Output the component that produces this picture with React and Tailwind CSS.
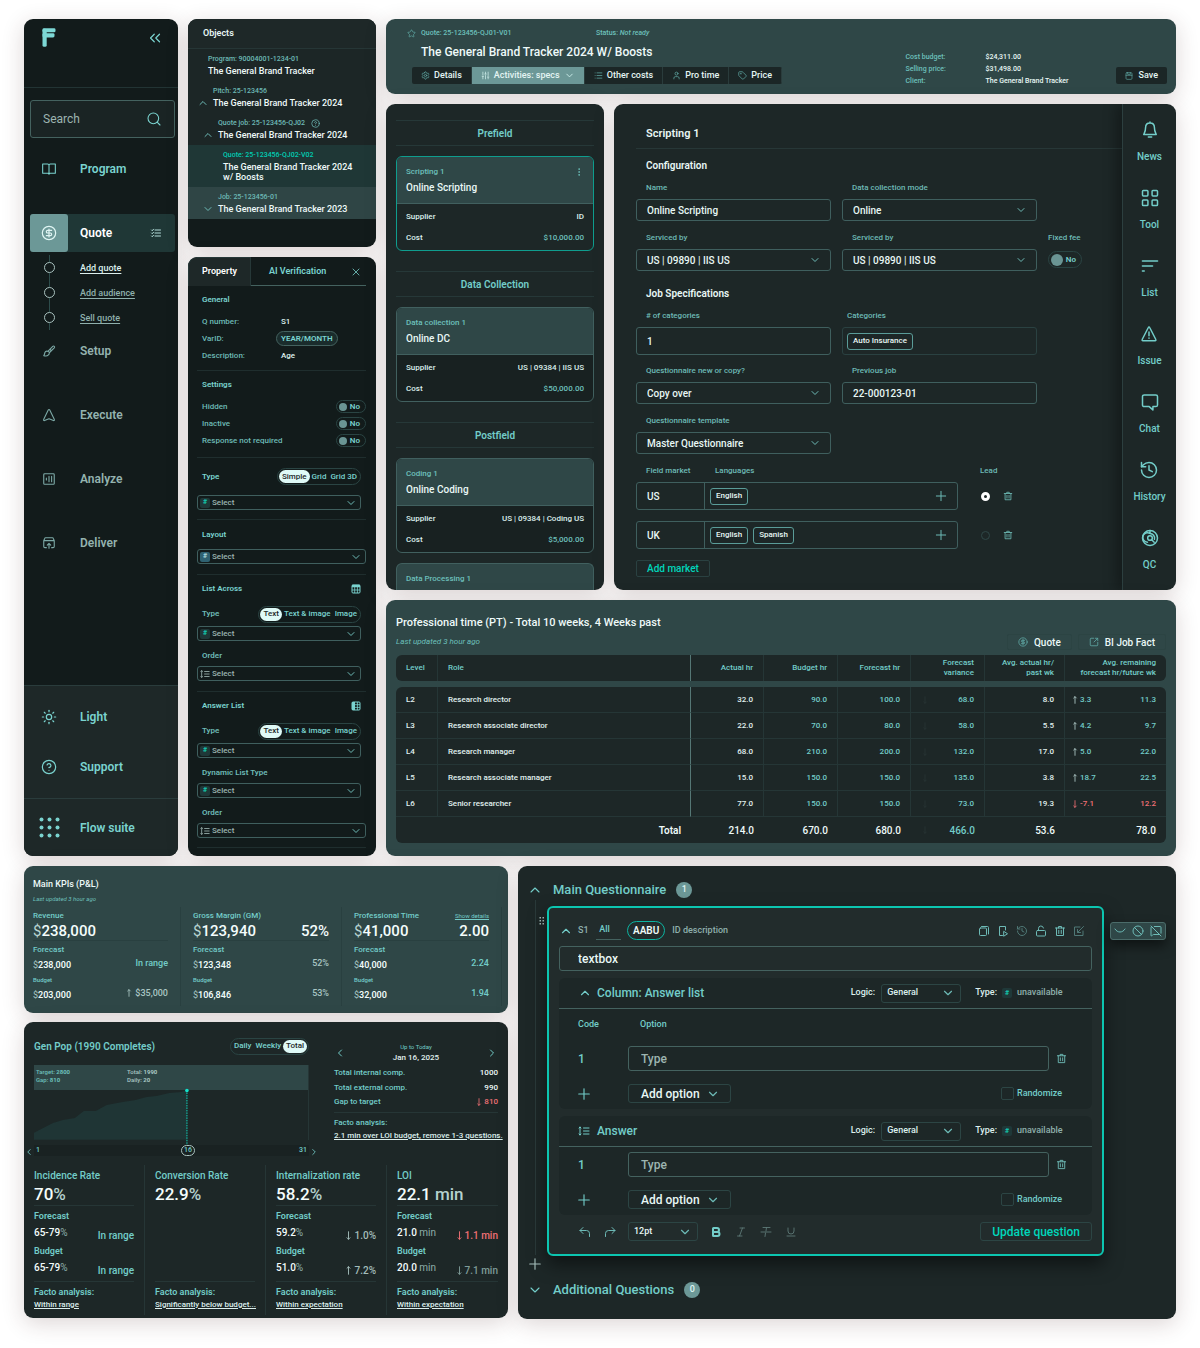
import React from 'react'
import clsx from 'clsx'
import {
  Ban,
  Bold,
  ChevronDown,
  ChevronLeft,
  ChevronRight,
  ChevronsLeft,
  ChevronUp,
  CircleDollarSign,
  CircleHelp,
  EllipsisVertical,
  History,
  Italic,
  List,
  LockOpen,
  MessageSquareOff,
  MoveDown,
  MoveUp,
  Plus,
  Search,
  Settings,
  SlidersVertical,
  SquareArrowOutUpRight,
  Star,
  Sun,
  Tag,
  Underline,
  User,
  X,
} from 'lucide-react'

/* ---------- icons ---------- */

function Svg({ className, children, strokeWidth = 1.6 }) {
  return (
    <svg
      viewBox="0 0 24 24"
      fill="none"
      stroke="currentColor"
      strokeWidth={strokeWidth}
      strokeLinecap="round"
      strokeLinejoin="round"
      aria-hidden="true"
      className={className}
    >
      {children}
    </svg>
  )
}

const Logo = () => (
  <svg viewBox="0 0 14 19" className="h-[19px] w-3.5 text-[#7dd8d5]" fill="currentColor" role="img" aria-label="Flow">
    <rect x="0.5" y="0.3" width="13" height="4" rx="1.4" />
    <rect x="0.5" y="5.2" width="12" height="4.2" rx="1.4" />
    <rect x="0.5" y="0.8" width="4.2" height="18" rx="1.6" />
  </svg>
)

const BookIcon = ({ className }) => (
  <Svg className={className}>
    <path d="M12 6.500V19M12 6.500C12 5.400 11.100 4.500 10 4.500H2.500v14H10c1.100 0 2 .4 2 1.200 0-.8.9-1.200 2-1.200h7.500v-14H14c-1.100 0-2 .9-2 2z" />
  </Svg>
)

const TaskListIcon = ({ className }) => (
  <Svg className={className} strokeWidth={2}>
    <path d="M10 6h11M10 12h11M10 18h11M3 6l1.500 1.500L7 4.500M3 12l1.500 1.500L7 10.500M3 18l1.500 1.500L7 16.500" />
  </Svg>
)

const BrushIcon = ({ className }) => (
  <Svg className={className} strokeWidth={1.9}>
    <path d="M10 12.500L18.500 4c.8-.8 2-.8 2.600-.1.700.7.600 1.800-.1 2.600L12.500 15M10 12.500c-2-.6-4.300.2-5 2-.7 1.900-.5 4-2 5.500 2.500.9 6.200.6 8-1.200 1.200-1.200 1.700-2.500 1.500-3.800M10 12.500c1.300.3 2.200 1.200 2.500 2.500M13.500 9l2.500 2.500" />
  </Svg>
)

const ExecuteIcon = ({ className }) => (
  <Svg className={className} strokeWidth={1.9}>
    <path d="M10.700 3.300L2.800 19.600c-.6 1.100.4 2.300 1.600 1.900L12 18.500l7.600 3c1.200.4 2.200-.8 1.600-1.900L13.300 3.300c-.6-1-2-1-2.600 0z" />
  </Svg>
)

const AnalyzeIcon = ({ className }) => (
  <Svg className={className} strokeWidth={1.9}>
    <rect x="3" y="3" width="18" height="18" rx="1.500" />
    <path d="M7.500 10.500v3M12 7.500v9M16.500 7.500v9" />
  </Svg>
)

const DeliverIcon = ({ className }) => (
  <Svg className={className} strokeWidth={1.9}>
    <path d="M7.500 20H5a2 2 0 01-2-2V8l1.600-3.800c.2-.7.800-1.200 1.600-1.200h11.600c.8 0 1.400.5 1.600 1.200L21 8v10a2 2 0 01-2 2h-2.500M3 8h18M12 21v-8M9 15.500l3-3 3 3" />
  </Svg>
)

const DotGridIcon = () => (
  <svg viewBox="0 0 21 21" className="size-[21px]" fill="currentColor" aria-hidden="true">
    {[2.5, 10.5, 18.5].map((y) =>
      [2.5, 10.5, 18.5].map((x) => <circle key={x + '-' + y} cx={x} cy={y} r="2" />)
    )}
  </svg>
)

const BellIcon = ({ className }) => (
  <Svg className={className} strokeWidth={1.8}>
    <path d="M12 3.500c-3.300 0-5.300 2.300-5.300 5.500 0 5-1.700 6.500-2.200 8.500h15c-.5-2-2.200-3.500-2.200-8.500 0-3.200-2-5.500-5.300-5.500zM12 3.500V2.500M10 20.500h4" />
  </Svg>
)

const ToolIcon = ({ className }) => (
  <Svg className={className} strokeWidth={1.8}>
    <rect x="3" y="3" width="6.500" height="6.500" rx="1" />
    <rect x="14.500" y="3" width="6.500" height="6.500" rx="1" />
    <rect x="3" y="14.500" width="6.500" height="6.500" rx="1" />
    <rect x="14.500" y="14.500" width="6.500" height="6.500" rx="1" />
  </Svg>
)

const BarsIcon = ({ className }) => (
  <Svg className={className} strokeWidth={2}>
    <path d="M3 6h18M3 12h12M3 18h2" />
  </Svg>
)

const IssueIcon = ({ className }) => (
  <Svg className={className} strokeWidth={1.8}>
    <path d="M11.200 4.200L3.800 18.600c-.4.700.1 1.400.8 1.400h14.800c.7 0 1.200-.7.800-1.400L12.800 4.200c-.3-.7-1.300-.7-1.600 0zM12 9.500v4.500M12 16.800v.2" />
  </Svg>
)

const ChatIcon = ({ className }) => (
  <Svg className={className} strokeWidth={1.8}>
    <path d="M5 3.500h14a2 2 0 012 2v10a2 2 0 01-2 2h-3.500v4l-4.500-4H5a2 2 0 01-2-2v-10a2 2 0 012-2z" />
  </Svg>
)

const QcIcon = ({ className }) => (
  <Svg className={className} strokeWidth={1.8}>
    <circle cx="12" cy="12" r="9" />
    <circle cx="12" cy="12" r="2.800" />
    <path d="M12 3v3.500M9 17a5.700 5.700 0 113-10.500M12 6.500a5.600 5.600 0 015.300 7M14 14l3 3" />
  </Svg>
)

const TrashIcon = ({ className }) => (
  <Svg className={className} strokeWidth={2}>
    <path d="M3 6h18M9 6V3h6v3M5 6v15h14V6M9.500 10.500v6.500M14.500 10.500v6.500" />
  </Svg>
)

const SaveIcon = ({ className }) => (
  <Svg className={className} strokeWidth={2}>
    <rect x="3" y="2" width="18" height="20" rx="3" />
    <path d="M3 10h18M8 2v5h8V2" />
  </Svg>
)

const CopyIcon = ({ className }) => (
  <Svg className={className} strokeWidth={2}>
    <rect x="3" y="6" width="14" height="15" rx="2" />
    <path d="M7 3h12a2 2 0 012 2v13" />
  </Svg>
)

const RunIcon = ({ className }) => (
  <Svg className={className} strokeWidth={2}>
    <path d="M11 21H5V3h12v7M14 13l7 4.500-7 4.500z" />
  </Svg>
)

const EditIcon = ({ className }) => (
  <Svg className={className} strokeWidth={2}>
    <path d="M20 12v9H3V4h11M21 3L9 15M9 9v6h6" />
  </Svg>
)

const StrikeIcon = ({ className }) => (
  <Svg className={className} strokeWidth={1.8}>
    <path d="M6 3h14M13 3l-1 7M11 14l-1 7M2 12h20" />
  </Svg>
)

const OrderIcon = ({ className }) => (
  <Svg className={className} strokeWidth={2}>
    <path d="M4 4v16M2 6l2-2 2 2M2 18l2 2 2-2M11 6h11M11 12h11M11 18h11" />
  </Svg>
)

const UndoIcon = ({ className }) => (
  <Svg className={className} strokeWidth={2}>
    <path d="M8 3L2 9l6 6M2 9h13a6 6 0 016 6v6" />
  </Svg>
)

const DragIcon = () => (
  <svg viewBox="0 0 6 10" className="h-2.5 w-1.5" fill="currentColor" aria-hidden="true">
    {[1, 4, 7].map((y) => (
      <React.Fragment key={y}>
        <rect x="0.5" y={y} width="1.5" height="1.5" />
        <rect x="3.5" y={y} width="1.5" height="1.5" />
      </React.Fragment>
    ))}
  </svg>
)

const GridTopIcon = () => (
  <svg viewBox="0 0 10 10" className="size-2.5" fill="none" stroke="currentColor" aria-hidden="true">
    <rect x="1" y="1" width="8" height="8" rx="1" />
    <path d="M1 2h8" strokeWidth="2.5" />
    <path d="M1 6h8M3.7 3v6M6.4 3v6" strokeWidth="0.8" />
  </svg>
)

const GridLeftIcon = () => (
  <svg viewBox="0 0 10 10" className="size-2.5" fill="none" stroke="currentColor" aria-hidden="true">
    <rect x="1" y="1" width="8" height="8" rx="1" />
    <path d="M2.5 1v8" strokeWidth="3" />
    <path d="M6.4 1v8M4 3.7h5M4 6.4h5" strokeWidth="0.8" />
  </svg>
)

/* ---------- shared controls ---------- */

const panel = 'overflow-hidden rounded-[9px] shadow-[0_5px_22px_rgba(70,30,30,0.19)]'

function HashBadge({ className }) {
  return (
    <span
      className={clsx(
        'flex size-2.5 items-center justify-center rounded-xs text-[7px] leading-none font-bold',
        className || 'bg-[#1f3838] text-[#12c9b0]'
      )}
    >
      #
    </span>
  )
}

function Select({ value, label, id, icon, className, wrap, chevron = 'mr-2.5 size-3' }) {
  return (
    <span className={clsx('grid items-center', wrap)}>
      <select
        id={id}
        aria-label={label}
        className={clsx(
          'col-start-1 row-start-1 w-full min-w-0 appearance-none rounded-[3px] border bg-transparent outline-none',
          className
        )}
      >
        <option>{value}</option>
      </select>
      {icon && <span className="pointer-events-none col-start-1 row-start-1 ml-[3px] justify-self-start">{icon}</span>}
      <ChevronDown
        className={clsx('pointer-events-none col-start-1 row-start-1 justify-self-end text-[#6dbab6]', chevron)}
      />
    </span>
  )
}

function Toggle({ label, large }) {
  return (
    <label
      className={clsx(
        'flex items-center justify-between rounded-full border border-[#2a4443] pr-[5px] pl-0.5 text-[8px] font-semibold text-[#7ad3cf]',
        large ? 'h-[17px] w-[34px]' : 'h-[13px] w-[30px]'
      )}
    >
      <input
        type="checkbox"
        role="switch"
        aria-label={label}
        className={clsx('appearance-none rounded-full bg-[#6a9594]', large ? 'size-3' : 'size-2')}
      />
      <span className="leading-none">No</span>
    </label>
  )
}

function Segments({ items, active }) {
  return (
    <div className="flex h-[17px] items-center rounded-full border border-[#2a4443] px-px text-[8px] font-medium">
      {items.map((item) => (
        <button
          key={item}
          type="button"
          className={clsx(
            'h-[13px] rounded-full leading-none',
            item === active ? 'bg-[#dffaf7] px-[3px] text-[#1d2727]' : 'px-0.5 text-[#7ad3cf]'
          )}
        >
          {item}
        </button>
      ))}
    </div>
  )
}

/* ---------- sidebar ---------- */

const steps = [
  { name: 'Add quote', current: true },
  { name: 'Add audience' },
  { name: 'Sell quote' },
]

const later = [
  { name: 'Setup', Icon: BrushIcon },
  { name: 'Execute', Icon: ExecuteIcon },
  { name: 'Analyze', Icon: AnalyzeIcon },
  { name: 'Deliver', Icon: DeliverIcon },
]

function Sidebar() {
  return (
    <aside className={clsx(panel, 'flex w-[154px] shrink-0 flex-col bg-[#121b1b] text-xs font-semibold text-[#7ad3cf]')}>
      <div className="flex h-[69px] items-start justify-between border-b border-[#223434] pt-[9px] pr-3.5 pl-[18px]">
        <Logo />
        <button type="button" aria-label="Collapse menu" className="pt-px">
          <ChevronsLeft className="size-[18px]" strokeWidth={1.6} />
        </button>
      </div>

      <label className="mt-3 mr-[3px] ml-1.5 flex h-[38px] items-center rounded-[3px] border border-[#44625f] bg-[#1a2424] px-3">
        <input
          type="search"
          aria-label="Search"
          placeholder="Search"
          className="w-full min-w-0 bg-transparent font-normal outline-none placeholder:text-[#9db5b1]"
        />
        <Search className="size-4 shrink-0" strokeWidth={1.6} />
      </label>

      <nav className="mt-3 mr-[3px] ml-1.5 flex flex-col">
        <a href="#program" className="flex h-[38px] items-center">
          <span className="flex w-[38px] justify-center">
            <BookIcon className="size-4" />
          </span>
          <span className="ml-3">Program</span>
        </a>

        <a href="#quote" className="mt-[26px] flex h-[38px] items-center rounded-[3px] bg-[#1f3736] text-white">
          <span className="flex h-full w-[38px] items-center justify-center rounded-[3px] bg-[#6c9897] text-[#dff5f3]">
            <CircleDollarSign className="size-4" strokeWidth={1.8} />
          </span>
          <span className="ml-3 flex-1">Quote</span>
          <TaskListIcon className="mr-[13px] size-3 text-[#b5dedb]" />
        </a>

        <ul className="flex flex-col pt-[3px] pb-0.5 text-[9px] font-medium">
          {steps.map((step) => (
            <li key={step.name} className="flex h-[25px] items-stretch">
              <span className="flex w-[38px] flex-col items-center">
                <span className="w-px flex-1 bg-[#2d4c4b]" />
                <span className="size-[11px] rounded-full border border-[#a9c2bf]" />
                <span className="w-px flex-1 bg-[#2d4c4b]" />
              </span>
              <a
                href="#step"
                className={clsx(
                  'ml-3 flex items-center underline underline-offset-2',
                  step.current ? 'text-[#dcefed]' : 'text-[#8fb0ac]'
                )}
              >
                {step.name}
              </a>
            </li>
          ))}
        </ul>

        <div className="flex flex-col gap-[26px] text-[#94b3af]">
          {later.map(({ name, Icon }) => (
            <a key={name} href={'#' + name} className="flex h-[38px] items-center">
              <span className="flex w-[38px] justify-center text-[#7ca9a6]">
                <Icon className="size-3.5" />
              </span>
              <span className="ml-3">{name}</span>
            </a>
          ))}
        </div>
      </nav>

      <div className="mt-auto border-t border-[#2a3c3c] bg-[#1e2828]">
        <div className="px-1.5 py-1.5">
          <button type="button" className="flex h-[50px] w-full items-center">
            <span className="flex w-[38px] justify-center">
              <Sun className="size-4" strokeWidth={1.8} />
            </span>
            <span className="ml-3">Light</span>
          </button>
          <button type="button" className="flex h-[50px] w-full items-center">
            <span className="flex w-[38px] justify-center">
              <CircleHelp className="size-4" strokeWidth={1.8} />
            </span>
            <span className="ml-3">Support</span>
          </button>
        </div>
        <button type="button" className="flex h-[58px] w-full items-center border-t border-[#2a3c3c] px-1.5">
          <span className="flex w-[38px] justify-center">
            <DotGridIcon />
          </span>
          <span className="ml-3">Flow suite</span>
        </button>
      </div>
    </aside>
  )
}

/* ---------- objects tree ---------- */

const objects = [
  { label: 'Program: 90004001-1234-01', title: 'The General Brand Tracker', pad: 'pl-[5px]' },
  { label: 'Pitch: 25-123456', title: 'The General Brand Tracker 2024', pad: 'pl-2.5', arrow: 'up' },
  { label: 'Quote job: 25-123456-QJ02', title: 'The General Brand Tracker 2024', pad: 'pl-[15px]', arrow: 'up', help: true },
  {
    label: 'Quote: 25-123456-QJ02-V02',
    title: 'The General Brand Tracker 2024 w/ Boosts',
    pad: 'pl-5',
    row: 'bg-[#1f3736]',
    tone: 'text-[#00cdb4]',
  },
  { label: 'Job: 25-123456-01', title: 'The General Brand Tracker 2023', pad: 'pl-[15px]', arrow: 'down', row: 'bg-[#2f4545]' },
]

function Objects() {
  return (
    <section className={clsx(panel, 'bg-[#121b1b] pb-7')}>
      <h2 className="flex h-[30px] items-center border-b border-[#263636] bg-[#1e2828] px-[15px] text-[9px] font-semibold text-[#e8f7f5]">
        Objects
      </h2>
      <ul className="bg-[#1c2626]">
        {objects.map((o) => (
          <li key={o.label} className={clsx('flex gap-[5px] py-[5px] pr-3 leading-[10px]', o.pad, o.row)}>
            <span className="mt-3 flex h-2.5 w-2.5 shrink-0 items-center justify-center text-[#6dbab6]">
              {o.arrow === 'up' && <ChevronUp className="size-3 shrink-0" />}
              {o.arrow === 'down' && <ChevronDown className="size-3 shrink-0" />}
            </span>
            <span>
              <span className={clsx('flex items-center gap-1.5 text-[7px] font-medium', o.tone || 'text-[#6dbab6]')}>
                {o.label}
                {o.help && <CircleHelp className="size-[9px]" />}
              </span>
              <span className="mt-0.5 block text-[9px] font-medium text-[#eef9f8]">{o.title}</span>
            </span>
          </li>
        ))}
      </ul>
    </section>
  )
}

/* ---------- property panel ---------- */

function PropSelect({ label, wide, icon }) {
  return (
    <Select
      label={label}
      value="Select"
      icon={icon || <HashBadge />}
      wrap={wide ? '' : 'mr-[5px]'}
      chevron="mr-1 size-3"
      className="h-[15px] border-[#3f5f5e] bg-[#1c2626] pl-[14px] text-[8px] text-[#9db5b1]"
    />
  )
}

const group = 'border-b border-[#1f2e2e]'

function Property() {
  const order = <OrderIcon className="size-2.5 text-[#9db5b1]" />
  const general = [
    ['Q number:', 'S1'],
    ['VarID:', 'YEAR/MONTH'],
    ['Description:', 'Age'],
  ]
  return (
    <section className={clsx(panel, 'flex-1 bg-[#121b1b] pb-2 text-[8px] font-medium text-[#6dbab6]')}>
      <div className="flex h-[29px] text-[9px]">
        <button
          type="button"
          className="w-[63px] rounded-tl-[9px] border border-b-0 border-[#263838] bg-[#1e2828] font-semibold text-white"
        >
          Property
        </button>
        <div className="mr-2.5 flex flex-1 items-center justify-between border-b border-[#44625f] pt-0.5 pr-1 pl-[18px]">
          <button type="button" className="font-semibold text-[#7ad3cf]">
            AI Verification
          </button>
          <button type="button" aria-label="Close">
            <X className="size-3" strokeWidth={1.8} />
          </button>
        </div>
      </div>

      <div className="pr-2.5 pl-[9px]">
        <div className={clsx(group, 'pb-1.5 pl-[5px]')}>
          <h3 className="flex h-[27px] items-center font-semibold text-[#7ad3cf]">General</h3>
          {general.map(([key, value]) => (
            <div key={key} className="flex h-[17px] items-center">
              <span className="w-[74px]">{key}</span>
              {key === 'VarID:' ? (
                <span className="flex h-[15px] items-center rounded-full border border-[#44625f] bg-[#1a2c2c] px-1 font-semibold text-[#7ad3cf]">
                  {value}
                </span>
              ) : (
                <span className="ml-[5px] text-[#dff3f1]">{value}</span>
              )}
            </div>
          ))}
        </div>

        <div className={clsx(group, 'pb-2 pl-[5px]')}>
          <h3 className="flex h-[27px] items-center font-semibold text-[#7ad3cf]">Settings</h3>
          {['Hidden', 'Inactive', 'Response not required'].map((name) => (
            <div key={name} className="flex h-[17px] items-center justify-between">
              <span>{name}</span>
              <Toggle label={name} />
            </div>
          ))}
        </div>

        <div className={clsx(group, 'pb-[9px]')}>
          <div className="flex h-[37px] items-center justify-between px-[5px]">
            <h3 className="font-semibold text-[#7ad3cf]">Type</h3>
            <Segments items={['Simple', 'Grid', 'Grid 3D']} active="Simple" />
          </div>
          <PropSelect label="Type" />
        </div>

        <div className={clsx(group, 'pb-2.5')}>
          <h3 className="flex h-[29px] items-center pl-[5px] font-semibold text-[#7ad3cf]">Layout</h3>
          <PropSelect label="Layout" wide icon={<HashBadge className="bg-[#2f6272] text-[#a9d6dc]" />} />
        </div>

        <div className={clsx(group, 'pb-2.5')}>
          <div className="flex h-[27px] items-center justify-between px-[5px] text-[#7ad3cf]">
            <h3 className="font-semibold">List Across</h3>
            <GridTopIcon />
          </div>
          <div className="flex h-6 items-center justify-between px-[5px]">
            <h4 className="font-semibold">Type</h4>
            <Segments items={['Text', 'Text & image', 'Image']} active="Text" />
          </div>
          <PropSelect label="List type" />
          <h4 className="h-[25px] pt-[9px] pl-[5px] font-semibold">Order</h4>
          <PropSelect label="List order" icon={order} />
        </div>

        <div className={clsx(group, 'pb-[9px]')}>
          <div className="flex h-[27px] items-center justify-between px-[5px] text-[#7ad3cf]">
            <h3 className="font-semibold">Answer List</h3>
            <GridLeftIcon />
          </div>
          <div className="flex h-6 items-center justify-between px-[5px]">
            <h4 className="font-semibold">Type</h4>
            <Segments items={['Text', 'Text & image', 'Image']} active="Text" />
          </div>
          <PropSelect label="Answer type" />
          <h4 className="h-[25px] pt-[9px] pl-[5px] font-semibold">Dynamic List Type</h4>
          <PropSelect label="Dynamic list type" />
          <h4 className="h-[25px] pt-[9px] pl-[5px] font-semibold">Order</h4>
          <PropSelect label="Answer order" wide icon={order} />
        </div>
      </div>
    </section>
  )
}

/* ---------- quote header ---------- */

const tabs = [
  { name: 'Details', Icon: Settings },
  { name: 'Activities: specs', Icon: SlidersVertical, active: true },
  { name: 'Other costs', Icon: List },
  { name: 'Pro time', Icon: User },
  { name: 'Price', Icon: Tag },
]

function QuoteHeader() {
  const costs = [
    ['Cost budget:', '$24,311.00'],
    ['Selling price:', '$31,498.00'],
    ['Client:', 'The General Brand Tracker'],
  ]
  return (
    <header className={clsx(panel, 'flex items-end bg-[#2f4747] pt-[9px] pr-[9px] pb-[7px] pl-[21px]')}>
      <div className="mb-[3px] flex-1">
        <div className="flex h-2.5 items-center text-[7px] font-medium text-[#6dc0bc]">
          <Star className="mr-[5px] size-[9px]" strokeWidth={1.5} />
          <span className="w-[175px]">Quote: 25-123456-QJ01-V01</span>
          <span>
            Status: <em>Not ready</em>
          </span>
        </div>
        <h1 className="mt-1.5 ml-3.5 h-4 text-xs leading-4 font-medium text-[#eefaf9]">
          The General Brand Tracker 2024 W/ Boosts
        </h1>
        <div className="mt-[7px] ml-[5px] flex h-[17px] w-max overflow-hidden rounded-xs text-[9px] font-medium text-[#e4f5f3]">
          {tabs.map(({ name, Icon, active }) => (
            <button
              key={name}
              type="button"
              className={clsx(
                'flex items-center gap-1 border-r border-[#2a3c3c] px-[9px]',
                active ? 'bg-[#6c9897]' : 'bg-[#1b2626]'
              )}
            >
              <Icon className={clsx('size-[9px]', active ? 'text-[#cdeeea]' : 'text-[#5fa7a3]')} />
              {name}
              {active && <ChevronDown className="size-[11px] text-[#cdeeea]" />}
            </button>
          ))}
        </div>
      </div>

      <dl className="mr-10 text-[7px] leading-3 font-medium">
        {costs.map(([key, value]) => (
          <div key={key} className="flex">
            <dt className="w-20 text-[#6dc0bc]">{key}</dt>
            <dd className="w-[90px] text-[#e8f7f5]">{value}</dd>
          </div>
        ))}
      </dl>

      <button
        type="button"
        className="mb-[3px] flex h-[17px] items-center gap-1.5 rounded-xs bg-[#1b2626] px-[9px] text-[9px] font-medium text-[#e4f5f3]"
      >
        <SaveIcon className="size-2 text-[#5fa7a3]" />
        Save
      </button>
    </header>
  )
}

/* ---------- activities ---------- */

const activities = [
  { phase: 'Prefield', tag: 'Scripting 1', name: 'Online Scripting', supplier: 'ID', cost: '$10,000.00', active: true },
  { phase: 'Data Collection', tag: 'Data collection 1', name: 'Online DC', supplier: 'US | 09384 | IIS US', cost: '$50,000.00' },
  { phase: 'Postfield', tag: 'Coding 1', name: 'Online Coding', supplier: 'US | 09384 | Coding US', cost: '$5,000.00' },
]

function Activities() {
  return (
    <section className={clsx(panel, 'flex w-[218px] shrink-0 flex-col bg-[#1d2727] px-2.5 pt-4 font-medium')}>
      {activities.map((a) => (
        <div key={a.phase} className="mb-5 last-of-type:mb-2.5">
          <h2 className="flex h-[26px] items-center justify-center border-y border-[#263838] text-[10px] font-semibold text-[#73cdc9]">
            {a.phase}
          </h2>
          <article
            className={clsx(
              'mt-2.5 overflow-hidden rounded-md border text-[8px] text-[#dcefed]',
              a.active ? 'border-[#0f9d8e] bg-[#1d2727]' : 'border-[#41605f] bg-[#182121]'
            )}
          >
            <div className="border-b border-[#41605f] bg-[#2f4747] px-[9px] py-[9px] leading-3">
              <div className="flex items-center justify-between text-[#6dc0bc]">
                {a.tag}
                {a.active && (
                  <button type="button" aria-label="More">
                    <EllipsisVertical className="size-2.5" />
                  </button>
                )}
              </div>
              <h3 className="mt-1 text-[10px] text-[#eaf8f6]">{a.name}</h3>
            </div>
            <dl className="px-[9px] pt-[7px] pb-1.5 leading-3">
              <div className="flex justify-between">
                <dt>Supplier</dt>
                <dd>{a.supplier}</dd>
              </div>
              <div className="mt-[9px] flex justify-between">
                <dt>Cost</dt>
                <dd className="text-[#6dc0bc]">{a.cost}</dd>
              </div>
            </dl>
          </article>
        </div>
      ))}
      <article className="flex-1 rounded-t-md border border-b-0 border-[#41605f] bg-[#2f4747] px-[9px] pt-[9px] text-[8px] leading-3 text-[#6dc0bc]">
        Data Processing 1
      </article>
    </section>
  )
}

/* ---------- scripting form ---------- */

const tools = [
  { name: 'News', Icon: BellIcon },
  { name: 'Tool', Icon: ToolIcon },
  { name: 'List', Icon: BarsIcon },
  { name: 'Issue', Icon: IssueIcon },
  { name: 'Chat', Icon: ChatIcon },
  { name: 'History', Icon: History },
  { name: 'QC', Icon: QcIcon },
]

const markets = [
  { code: 'US', languages: ['English'], lead: true },
  { code: 'UK', languages: ['English', 'Spanish'] },
]

const field =
  'rounded-[3px] border border-[#3f5f5e] bg-transparent px-2.5 text-[10px] font-medium text-[#e8f7f5] outline-none'

function Field({ id, label, children }) {
  return (
    <div className="flex flex-col">
      <label htmlFor={id} className="mb-[5px] h-3 pl-2.5 text-[8px] leading-3 text-[#6dbab6]">
        {label}
      </label>
      {children}
    </div>
  )
}

const Chip = ({ children }) => (
  <span className="flex h-[17px] items-center rounded-[3px] border border-[#5a9c98] px-[5px] text-[8px] text-[#e8f7f5]">
    {children}
  </span>
)

function ScriptingForm() {
  const row = 'grid grid-cols-[195fr_195fr_74fr] gap-x-[11px]'
  return (
    <section className={clsx(panel, 'flex flex-1 bg-[#1d2727] font-medium')}>
      <form className="flex-1 pt-4 pb-[13px] pl-[22px]">
        <h2 className="flex h-[29px] items-center border-b border-[#273737] pl-2.5 text-[11px] font-semibold text-[#e8f7f5]">
          Scripting 1
        </h2>

        <h3 className="mt-2.5 pl-2.5 text-[10px] leading-[14px] font-semibold text-[#e8f7f5]">Configuration</h3>
        <div className={clsx(row, 'mt-[9px]')}>
          <Field id="name" label="Name">
            <input id="name" defaultValue="Online Scripting" className={clsx(field, 'h-[22px]')} />
          </Field>
          <Field id="mode" label="Data collection mode">
            <Select id="mode" value="Online" className={clsx(field, 'h-[22px]')} />
          </Field>
        </div>
        <div className={clsx(row, 'mt-[11px]')}>
          <Field id="service-a" label="Serviced by">
            <Select id="service-a" value="US | 09890 | IIS US" className={clsx(field, 'h-[22px]')} />
          </Field>
          <Field id="service-b" label="Serviced by">
            <Select id="service-b" value="US | 09890 | IIS US" className={clsx(field, 'h-[22px]')} />
          </Field>
          <div>
            <div className="mb-[7px] h-3 text-[8px] leading-3 text-[#6dbab6]">Fixed fee</div>
            <Toggle label="Fixed fee" large />
          </div>
        </div>

        <h3 className="mt-4 pl-2.5 text-[10px] leading-[14px] font-semibold text-[#e8f7f5]">Job Specifications</h3>
        <div className={clsx(row, 'mt-[9px]')}>
          <Field id="count" label="# of categories">
            <input id="count" defaultValue="1" className={clsx(field, 'h-7')} />
          </Field>
          <div>
            <div className="mb-[5px] h-3 pl-[5px] text-[8px] leading-3 text-[#6dbab6]">Categories</div>
            <div className="flex h-7 items-center rounded-[3px] border border-[#2a4141] px-1">
              <Chip>Auto Insurance</Chip>
            </div>
          </div>
        </div>
        <div className={clsx(row, 'mt-2.5')}>
          <Field id="copy" label="Questionnaire new or copy?">
            <Select id="copy" value="Copy over" className={clsx(field, 'h-[22px]')} />
          </Field>
          <Field id="previous" label="Previous job">
            <input id="previous" defaultValue="22-000123-01" className={clsx(field, 'h-[22px]')} />
          </Field>
        </div>
        <div className={clsx(row, 'mt-[11px]')}>
          <Field id="template" label="Questionnaire template">
            <Select id="template" value="Master Questionnaire" className={clsx(field, 'h-[22px]')} />
          </Field>
        </div>

        <div className="mt-[11px] mb-[5px] flex h-3 pl-2.5 text-[8px] leading-3 text-[#6dbab6]">
          <span className="w-[69px]">Field market</span>
          <span className="flex-1">Languages</span>
          <span className="w-[142px]">Lead</span>
        </div>
        <div className="flex flex-col gap-[11px]">
          {markets.map((m) => (
            <div key={m.code} className="flex items-center">
              <div className="flex h-7 flex-1 items-center rounded-[3px] border border-[#3f5f5e]">
                <span className="flex h-full w-[68px] items-center border-r border-[#3f5f5e] pl-2.5 text-[10px] text-[#e8f7f5]">
                  {m.code}
                </span>
                <span className="flex flex-1 gap-[5px] pl-[5px]">
                  {m.languages.map((l) => (
                    <Chip key={l}>{l}</Chip>
                  ))}
                </span>
                <button type="button" aria-label="Add language" className="mr-2 text-[#6dbab6]">
                  <Plus className="size-4" strokeWidth={1.5} />
                </button>
              </div>
              <div className="flex w-[164px] items-center pl-[23px]">
                <input
                  type="radio"
                  name="lead"
                  aria-label={'Lead ' + m.code}
                  defaultChecked={m.lead}
                  className="size-[9px] appearance-none rounded-full border border-[#2f4747] checked:border-3 checked:border-white"
                />
                <button type="button" aria-label={'Delete ' + m.code} className="ml-[13px] text-[#6dbab6]">
                  <TrashIcon className="size-2.5" />
                </button>
              </div>
            </div>
          ))}
        </div>
        <button
          type="button"
          className="mt-[11px] flex h-[17px] items-center rounded-xs border border-[#2a4141] px-2.5 text-[10px] text-[#00d6bb]"
        >
          Add market
        </button>
      </form>

      <nav className="flex w-[54px] shrink-0 flex-col items-center gap-6 border-l border-[#2c3f3f] pt-4 shadow-[-6px_0_12px_rgba(0,0,0,0.3)]">
        {tools.map(({ name, Icon }) => (
          <a key={name} href={'#' + name} className="flex flex-col items-center gap-2.5 text-[10px] leading-[14px] text-[#73cdc9]">
            <Icon className="size-5" strokeWidth={1.8} />
            {name}
          </a>
        ))}
      </nav>
    </section>
  )
}

/* ---------- professional time ---------- */

const columns = [
  { name: 'Level', width: 'w-[42px]' },
  { name: 'Role' },
  { name: 'Actual hr', width: 'w-[73px]' },
  { name: 'Budget hr', width: 'w-[74px]' },
  { name: 'Forecast hr', width: 'w-[73px]' },
  { name: 'Forecast variance', width: 'w-[74px]', pad: 'pl-6' },
  { name: 'Avg. actual hr/ past wk', width: 'w-[80px]', pad: 'pl-4' },
  { name: 'Avg. remaining forecast hr/future wk', width: 'w-[101px]', pad: 'pl-2' },
]

const roles = [
  ['L2', 'Research director', '32.0', '90.0', '100.0', '68.0', '8.0', '3.3', '11.3'],
  ['L3', 'Research associate director', '22.0', '70.0', '80.0', '58.0', '5.5', '4.2', '9.7'],
  ['L4', 'Research manager', '68.0', '210.0', '200.0', '132.0', '17.0', '5.0', '22.0'],
  ['L5', 'Research associate manager', '15.0', '150.0', '150.0', '135.0', '3.8', '18.7', '22.5'],
  ['L6', 'Senior researcher', '77.0', '150.0', '150.0', '73.0', '19.3', '-7.1', '12.2'],
]

function Variance({ children }) {
  return (
    <span className="flex items-center justify-between">
      <MoveDown className="size-2 text-[#2a3838]" />
      {children}
    </span>
  )
}

function ProfessionalTime() {
  const cell = 'border-r border-b border-[#253636] bg-[#1d2727] px-2.5'
  const button = 'flex h-4 items-center gap-1.5 rounded-xs border border-[#2c4443] px-2.5'
  return (
    <section className={clsx(panel, 'bg-[#2f4747] px-2.5 pt-[15px] pb-[13px] font-medium')}>
      <h2 className="text-[11px] leading-4 text-[#eefaf9]">Professional time (PT) - Total 10 weeks, 4 Weeks past</h2>
      <div className="mt-[3px] mb-[5px] flex h-4 items-center justify-between">
        <em className="text-[8px] font-normal text-[#6dc0bc]">Last updated 3 hour ago</em>
        <div className="flex gap-1.5 text-[10px] text-[#eaf8f6]">
          <button type="button" className={button}>
            <CircleDollarSign className="size-2.5 text-[#5fa7a3]" />
            Quote
          </button>
          <button type="button" className={button}>
            <SquareArrowOutUpRight className="size-2.5 text-[#5fa7a3]" />
            BI Job Fact
          </button>
        </div>
      </div>

      <table className="w-full table-fixed border-separate border-spacing-0 text-right text-[8px] text-[#e0f1ef]">
        <thead>
          <tr className="h-[26px] leading-[10px] text-[#73cdc9]">
            {columns.map((c, i) => (
              <th
                key={c.name}
                scope="col"
                className={clsx(
                  'bg-[#1d2727] pr-2.5 font-medium last:rounded-r-md first:rounded-l-md',
                  c.width,
                  c.pad || 'pl-2.5',
                  i < 2 && 'text-left',
                  i < 7 && 'border-r',
                  i === 1 ? 'border-[#557775]' : 'border-[#253636]'
                )}
              >
                {c.name}
              </th>
            ))}
          </tr>
        </thead>
        <tbody>
          <tr aria-hidden="true">
            <td colSpan={8} className="h-1.5" />
          </tr>
          {roles.map((r, n) => {
            const down = r[7].startsWith('-')
            const Arrow = down ? MoveDown : MoveUp
            return (
              <tr key={r[0]} className="h-[26px] text-[#73cdc9]">
                <td className={clsx(cell, 'text-left text-[#e0f1ef]', n === 0 && 'rounded-tl-md')}>{r[0]}</td>
                <td className="border-r border-b border-r-[#557775] border-b-[#253636] bg-[#1d2727] px-2.5 text-left text-[#e0f1ef]">
                  {r[1]}
                </td>
                <td className={clsx(cell, 'text-[#e0f1ef]')}>{r[2]}</td>
                <td className={cell}>{r[3]}</td>
                <td className={cell}>{r[4]}</td>
                <td className={cell}>
                  <Variance>{r[5]}</Variance>
                </td>
                <td className={clsx(cell, 'text-[#e0f1ef]')}>{r[6]}</td>
                <td
                  className={clsx(
                    'border-b border-[#253636] bg-[#1d2727] pr-2.5 pl-1.5',
                    n === 0 && 'rounded-tr-md',
                    down && 'text-[#f07075]'
                  )}
                >
                  <span className="flex items-center">
                    <Arrow className={clsx('size-2', !down && 'text-[#b5cfcc]')} strokeWidth={2.5} />
                    <span className="ml-px flex-1 text-left">{r[7]}</span>
                    {r[8]}
                  </span>
                </td>
              </tr>
            )
          })}
        </tbody>
        <tfoot>
          <tr className="h-[26px] text-[10px] text-[#eefaf9]">
            <th scope="row" colSpan={2} className="rounded-bl-md bg-[#1d2727] px-2.5 text-right font-semibold">
              Total
            </th>
            <td className="bg-[#1d2727] px-2.5">214.0</td>
            <td className="bg-[#1d2727] px-2.5">670.0</td>
            <td className="bg-[#1d2727] px-2.5">680.0</td>
            <td className="bg-[#1d2727] px-2.5 text-[#73cdc9]">
              <Variance>466.0</Variance>
            </td>
            <td className="bg-[#1d2727] px-2.5">53.6</td>
            <td className="rounded-br-md bg-[#1d2727] px-2.5">78.0</td>
          </tr>
        </tfoot>
      </table>
    </section>
  )
}

/* ---------- KPIs ---------- */

const kpis = [
  {
    name: 'Revenue',
    value: '238,000',
    forecast: '238,000',
    forecastNote: <span className="font-medium text-[#73cdc9]">In range</span>,
    budget: '203,000',
    budgetNote: (
      <span className="flex items-center gap-0.5">
        <MoveUp className="size-2" strokeWidth={2.5} /> $35,000
      </span>
    ),
  },
  {
    name: 'Gross Margin (GM)',
    value: '123,940',
    side: '52%',
    forecast: '123,348',
    forecastNote: '52%',
    budget: '106,846',
    budgetNote: '53%',
  },
  {
    name: 'Professional Time',
    value: '41,000',
    side: '2.00',
    link: 'Show details',
    forecast: '40,000',
    forecastNote: <span className="text-[#73cdc9]">2.24</span>,
    budget: '32,000',
    budgetNote: <span className="text-[#73cdc9]">1.94</span>,
  },
]

function KpiLine({ value, note }) {
  return (
    <div className="mt-px flex h-3.5 justify-between text-[9px] leading-3">
      <span className="pt-0.5 font-semibold text-[#eefaf9]">
        <span className="font-normal text-[#a9c6c3]">$</span>
        {value}
      </span>
      <span className="text-[#a9c6c3]">{note}</span>
    </div>
  )
}

function Kpis() {
  return (
    <section className={clsx(panel, 'bg-[#2f4747] pt-[11px] pr-1.5 pb-[7px] pl-[9px] font-medium')}>
      <h2 className="text-[9px] leading-[14px] text-[#eefaf9]">Main KPIs (P&amp;L)</h2>
      <em className="mt-[3px] block text-[6px] leading-[10px] font-normal text-[#6dc0bc]">Last updated 3 hour ago</em>
      <div className="mt-[3px] grid grid-cols-[148fr_161fr_160fr]">
        {kpis.map((k) => (
          <div key={k.name} className="border-r border-[#294040] pt-[3px] pr-3 pb-[5px] pl-3 first:pl-0">
            <div className="flex justify-between text-[8px] leading-3 text-[#73cdc9]">
              {k.name}
              {k.link && (
                <a href="#details" className="text-[6px] font-normal underline">
                  {k.link}
                </a>
              )}
            </div>
            <div className="flex justify-between border-b border-[#294040] text-[15px] leading-[18px] text-[#f4fdfc]">
              <span>
                <span className="font-normal text-[#b9d4d1]">$</span>
                {k.value}
              </span>
              <span>{k.side}</span>
            </div>
            <div className="mt-[3px] text-[8px] leading-3 text-[#73cdc9]">Forecast</div>
            <KpiLine value={k.forecast} note={k.forecastNote} />
            <div className="mt-[3px] text-[6px] leading-3 text-[#73cdc9]">Budget</div>
            <KpiLine value={k.budget} note={k.budgetNote} />
          </div>
        ))}
      </div>
    </section>
  )
}

/* ---------- gen pop ---------- */

const rates = [
  {
    name: 'Incidence Rate',
    value: '70',
    unit: '%',
    rows: [
      { label: 'Forecast', value: '65-79', note: 'In range', tone: 'text-[#73cdc9]' },
      { label: 'Budget', value: '65-79', note: 'In range', tone: 'text-[#73cdc9]' },
    ],
    analysis: 'Within range',
  },
  { name: 'Conversion Rate', value: '22.9', unit: '%', rows: [], analysis: 'Significantly below budget...' },
  {
    name: 'Internalization rate',
    value: '58.2',
    unit: '%',
    rows: [
      { label: 'Forecast', value: '59.2', note: '1.0%', Arrow: MoveDown, tone: 'text-[#a3bdba]' },
      { label: 'Budget', value: '51.0', note: '7.2%', Arrow: MoveUp, tone: 'text-[#a3bdba]' },
    ],
    analysis: 'Within expectation',
  },
  {
    name: 'LOI',
    value: '22.1',
    unit: ' min',
    rows: [
      { label: 'Forecast', value: '21.0', note: '1.1 min', Arrow: MoveDown, tone: 'text-[#f07075]' },
      { label: 'Budget', value: '20.0', note: '7.1 min', Arrow: MoveDown, tone: 'text-[#7f9c99]' },
    ],
    analysis: 'Within expectation',
  },
]

function Rate({ rate }) {
  return (
    <div className="flex flex-col border-r border-[#263636] px-2.5 pt-1 pb-1 last:border-r-0">
      <h3 className="text-[10px] leading-[14px] whitespace-nowrap text-[#73cdc9]">{rate.name}</h3>
      <div
        className={clsx('text-[17px] leading-[22px] text-[#f4fdfc]', rate.rows.length > 0 && 'border-b border-[#263636]')}
      >
        {rate.value}
        <span className="text-[#b5d2cf]">{rate.unit}</span>
      </div>
      <div className="pb-[5px] text-[10px]">
        {rate.rows.map(({ label, value, note, Arrow, tone }) => (
          <div key={label} className="mt-1">
            <div className="text-[9px] leading-[13px] font-semibold text-[#73cdc9]">{label}</div>
            <div className="mt-[3px] flex h-[15px] justify-between leading-[14px]">
              <span className="text-[#f4fdfc]">
                {value}
                <span className="font-normal text-[#8fb0ac]">{rate.unit}</span>
              </span>
              <span className={clsx('flex items-center gap-px pt-[5px]', tone)}>
                {Arrow && <Arrow className="size-[9px]" strokeWidth={2.5} />}
                {note}
              </span>
            </div>
          </div>
        ))}
      </div>
      <div className="mt-auto border-t border-[#263636] pt-1">
        <div className="text-[9px] leading-[13px] font-semibold text-[#73cdc9]">Facto analysis:</div>
        <a href="#analysis" className="block text-[8px] leading-3 whitespace-nowrap text-[#dcefed] underline">
          {rate.analysis}
        </a>
      </div>
    </div>
  )
}

function GenPop() {
  const completes = [
    ['Total internal comp.', '1000'],
    ['Total external comp.', '990'],
  ]
  return (
    <section className={clsx(panel, 'bg-[#1d2727] pt-[15px] pb-[3px] font-medium')}>
      <div className="flex pr-2.5">
        <div className="flex-1">
          <div className="flex h-[18px] items-center justify-between px-2.5">
            <h2 className="text-[10px] font-semibold text-[#73cdc9]">Gen Pop (1990 Completes)</h2>
            <Segments items={['Daily', 'Weekly', 'Total']} active="Total" />
          </div>
          <div className="mx-2.5 mt-2.5 border-r border-[#263636]">
            <div className="flex h-[25px] bg-[#2f4747] pt-[3px] pl-0.5 text-[6px] leading-2">
              <div className="w-[91px] text-[#6dc0bc]">
                Target: <b>2800</b>
                <br />
                Gap: <b>810</b>
              </div>
              <div className="text-[#a9c6c3]">
                Total: <b>1990</b>
                <br />
                Daily: <b>20</b>
              </div>
            </div>
            <svg viewBox="0 0 275 50" className="block w-full overflow-visible" role="img" aria-label="Completes by day">
              <path
                d="M0 50V43L19 33 29 30 41 28 50 21H62L73 15 89 12 102 10 113 7 123 6 136 3 148 2 153.500 0V50z"
                fill="#1f3535"
              />
              <path d="M153.500 0V56" stroke="#12d3bd" strokeDasharray="1.500 1" />
              <circle cx="153.500" cy="0.500" r="1.800" fill="#12e0c9" />
            </svg>
          </div>
          <div className="mt-[5px] flex h-[11px] items-center text-[7px] text-[#73cdc9]">
            <button type="button" aria-label="Earlier" className="flex w-2.5 justify-center pt-1">
              <ChevronLeft className="size-2.5" />
            </button>
            <div className="relative flex h-full flex-1 items-center justify-between bg-[#192222] px-0.5">
              <span>1</span>
              <span className="absolute left-[56%] flex h-[11px] w-3.5 -translate-x-1/2 items-center justify-center rounded-full border border-[#a9c2bf] bg-[#192222]">
                16
              </span>
              <span>31</span>
            </div>
            <button type="button" aria-label="Later" className="flex w-2.5 justify-center pt-1">
              <ChevronRight className="size-2.5" />
            </button>
          </div>
        </div>

        <div className="ml-[15px] w-[164px] text-[8px] text-[#73cdc9]">
          <div className="flex h-7 items-center justify-between pt-1">
            <button type="button" aria-label="Previous day">
              <ChevronLeft className="size-3" />
            </button>
            <div className="text-center">
              <div className="text-[6px] leading-[10px] font-normal">Up to Today</div>
              <div className="leading-3 text-[#e0f1ef]">Jan 16, 2025</div>
            </div>
            <button type="button" aria-label="Next day">
              <ChevronRight className="size-3" />
            </button>
          </div>
          {completes.map(([key, value]) => (
            <div key={key} className="flex h-[15px] items-center justify-between">
              <span>{key}</span>
              <span className="text-[#eefaf9]">{value}</span>
            </div>
          ))}
          <div className="flex h-[18px] items-center justify-between border-b border-[#263636] pb-[3px]">
            <span>Gap to target</span>
            <span className="flex items-center gap-px text-[#f07075]">
              <MoveDown className="size-2" strokeWidth={2.5} />
              810
            </span>
          </div>
          <div className="mt-1 leading-3">Facto analysis:</div>
          <a href="#analysis" className="mt-px block text-[8px] leading-3 whitespace-nowrap text-[#dcefed] underline">
            2.1 min over LOI budget, remove 1-3 questions.
          </a>
        </div>
      </div>

      <div className="mt-[9px] grid grid-cols-4">
        {rates.map((rate) => (
          <Rate key={rate.name} rate={rate} />
        ))}
      </div>
    </section>
  )
}

/* ---------- questionnaire ---------- */

function AnswerBlock({ title, icon, head }) {
  return (
    <div className="rounded-md bg-[#1d2727] pb-1.5 text-[9px] font-medium">
      <div className="flex h-[31px] items-center border-b border-[#44625f] pr-7 pl-[19px]">
        <span className="flex w-[19px] text-[#73cdc9]">{icon}</span>
        <h3 className="flex-1 text-xs text-[#73cdc9]">{title}</h3>
        <label className="flex items-center gap-1.5 text-[#dcefed]">
          Logic:
          <Select
            value="General"
            wrap="w-20"
            chevron="mr-1.5 size-3.5"
            className="h-[19px] border-[#2c4544] pl-[5px]"
          />
        </label>
        <span className="ml-3.5 text-[#dcefed]">Type:</span>
        <HashBadge className="mx-[5px] bg-[#1f3838] text-[#12c9b0]" />
        <span className="w-[47px] text-[#8fb0ac]">unavailable</span>
      </div>
      {head && (
        <div className="flex h-8 items-center pl-[19px] text-[#73cdc9]">
          <span className="w-[62px]">Code</span>
          <span>Option</span>
        </div>
      )}
      <div className="mt-[5px] flex items-center">
        <span className="w-[69px] pl-[19px] text-xs text-[#73cdc9]">1</span>
        <input
          aria-label={title + ' option 1'}
          placeholder="Type"
          className="h-[25px] min-w-0 flex-1 rounded-[3px] border border-[#44625f] bg-transparent px-3 text-xs outline-none placeholder:text-[#9db5b1]"
        />
        <button type="button" aria-label="Delete option" className="w-[43px] pl-[7px] text-[#6dbab6]">
          <TrashIcon className="size-[11px]" />
        </button>
      </div>
      <div className="mt-[13px] flex h-[19px] items-center pr-7 text-[#73cdc9]">
        <button type="button" aria-label="Add row" className="w-[69px] pl-4">
          <Plus className="size-[18px]" strokeWidth={1.5} />
        </button>
        <button
          type="button"
          className="flex h-full items-center gap-1.5 rounded-[3px] border border-[#2c4544] pr-2.5 pl-3 text-xs text-[#e8f7f5]"
        >
          Add option
          <ChevronDown className="size-3.5 text-[#6dbab6]" />
        </button>
        <label className="ml-auto flex items-center gap-[3px]">
          <input type="checkbox" className="size-[13px] appearance-none rounded-xs border border-[#2c4544]" />
          <span className="w-[47px]">Randomize</span>
        </label>
      </div>
    </div>
  )
}

function SectionTitle({ name, count, open }) {
  const Icon = open ? ChevronUp : ChevronDown
  return (
    <div className="flex h-5 items-center pl-[9px]">
      <button type="button" aria-label={'Toggle ' + name} className="text-[#73cdc9]">
        <Icon className="size-4" strokeWidth={1.6} />
      </button>
      <h2 className="ml-2.5 text-[13px] font-medium text-[#73cdc9]">{name}</h2>
      <span className="ml-2.5 flex size-4 items-center justify-center rounded-full bg-[#6c9897] text-[9px] font-medium text-[#dff5f3]">
        {count}
      </span>
    </div>
  )
}

function Questionnaire() {
  return (
    <section className={clsx(panel, 'flex-1 bg-[#1d2727] pt-3.5')}>
      <SectionTitle name="Main Questionnaire" count={1} open />

      <div className="flex pr-2.5 pl-3">
        <div className="flex w-[17px] shrink-0 flex-col text-[#a9c2bf]">
          <div className="flex flex-1">
            <span className="ml-[5px] w-px bg-[#2a3a3a]" />
            <span className="mt-4 ml-[3px]">
              <DragIcon />
            </span>
          </div>
          <button type="button" aria-label="Add question" className="-ml-1 size-[18px]">
            <Plus className="size-[18px]" strokeWidth={1.5} />
          </button>
        </div>

        <article className="mt-1.5 mb-[17px] flex-1 rounded-md border-2 border-[#0cc5b0] bg-[#222c2c] px-2.5 pt-[11px] pb-[13px] shadow-[0_8px_18px_rgba(0,0,0,0.5)]">
          <div className="flex h-[23px] items-center text-[9px] font-medium text-[#8fb0ac]">
            <button type="button" aria-label="Collapse question" className="text-[#73cdc9]">
              <ChevronUp className="size-3.5" />
            </button>
            <span className="ml-[5px] w-[18px]">S1</span>
            <button type="button" className="mr-1.5 h-[19px] w-[25px] border-b border-[#44625f] pr-2 text-[#73cdc9]">
              All
            </button>
            <span className="mr-[7px] flex h-[19px] items-center rounded-full border border-[#0cb3a1] px-[5px] text-[10px] font-semibold text-[#eefaf9]">
              AABU
            </span>
            <span className="flex-1">ID description</span>
            <span className="mr-[7px] flex items-center gap-[7px] text-[#6dbab6]">
              <button type="button" aria-label="Duplicate">
                <CopyIcon className="size-3" />
              </button>
              <button type="button" aria-label="Run">
                <RunIcon className="size-3" />
              </button>
              <button type="button" aria-label="History" className="text-[#4f7876]">
                <History className="size-3" />
              </button>
              <button type="button" aria-label="Unlock">
                <LockOpen className="size-3" />
              </button>
              <button type="button" aria-label="Delete">
                <TrashIcon className="size-3" />
              </button>
              <button type="button" aria-label="Edit" className="text-[#4f7876]">
                <EditIcon className="size-3" />
              </button>
            </span>
          </div>

          <input
            aria-label="Question text"
            defaultValue="textbox"
            className="mt-1 block h-[25px] w-full rounded-[3px] border border-[#44625f] bg-transparent px-[18px] text-xs font-medium text-[#e8f7f5] outline-none"
          />

          <div className="mt-[7px]">
            <AnswerBlock title="Column: Answer list" head icon={<ChevronUp className="size-3.5" />} />
          </div>
          <div className="mt-[7px]">
            <AnswerBlock title="Answer" icon={<OrderIcon className="size-3" />} />
          </div>

          <div className="mt-[7px] flex h-[19px] items-center text-[9px] font-medium">
            <div className="flex w-[69px] gap-[13px] pl-5 text-[#6dbab6]">
              <button type="button" aria-label="Undo">
                <UndoIcon className="size-3" />
              </button>
              <button type="button" aria-label="Redo">
                <UndoIcon className="size-3 -scale-x-100" />
              </button>
            </div>
            <Select
              label="Font size"
              value="12pt"
              wrap="w-[70px]"
              chevron="mr-1.5 size-3.5"
              className="h-[19px] border-[#2c4544] pl-[5px] text-[#e8f7f5]"
            />
            <div className="ml-3 flex gap-[13px] text-[#5d7977]">
              <button type="button" aria-label="Bold" className="text-[#73cdc9]">
                <Bold className="size-3" strokeWidth={4} />
              </button>
              <button type="button" aria-label="Italic">
                <Italic className="size-3" strokeWidth={1.8} />
              </button>
              <button type="button" aria-label="Strikethrough">
                <StrikeIcon className="size-3" />
              </button>
              <button type="button" aria-label="Underline">
                <Underline className="size-3" strokeWidth={1.8} />
              </button>
            </div>
            <button
              type="button"
              className="ml-auto h-full rounded-[3px] border border-[#2c4544] px-[11px] text-xs text-[#00d6bb]"
            >
              Update question
            </button>
          </div>
        </article>

        <div className="mt-[22px] ml-1.5 flex h-[18px] items-center gap-[6px] self-start rounded-[3px] border border-[#4b6c6a] bg-[#2f4747] px-[3px] text-[#6dbab6] shadow-[0_6px_12px_rgba(0,0,0,0.5)]">
          <button type="button" aria-label="Hide">
            <Svg className="size-3" strokeWidth={2}>
              <path d="M2 8c2.500 4 6 6 10 6s7.500-2 10-6" />
            </Svg>
          </button>
          <button type="button" aria-label="Disable">
            <Ban className="size-3" />
          </button>
          <button type="button" aria-label="Mute comments">
            <MessageSquareOff className="size-3" />
          </button>
        </div>
      </div>

      <div className="mt-[7px] mb-[19px]">
        <SectionTitle name="Additional Questions" count={0} />
      </div>
    </section>
  )
}

export default function App() {
  return (
    <div className="flex flex-col gap-2.5 bg-white px-6 pt-[19px] pb-7 font-['Roboto',sans-serif]">
      <div className="flex gap-2.5">
        <Sidebar />
        <div className="flex w-[188px] shrink-0 flex-col gap-2.5">
          <Objects />
          <Property />
        </div>
        <main className="flex min-w-0 flex-1 flex-col gap-2.5">
          <QuoteHeader />
          <div className="flex gap-2.5">
            <Activities />
            <ScriptingForm />
          </div>
          <ProfessionalTime />
        </main>
      </div>
      <div className="flex gap-2.5">
        <div className="flex w-[484px] shrink-0 flex-col gap-[9px]">
          <Kpis />
          <GenPop />
        </div>
        <Questionnaire />
      </div>
    </div>
  )
}
